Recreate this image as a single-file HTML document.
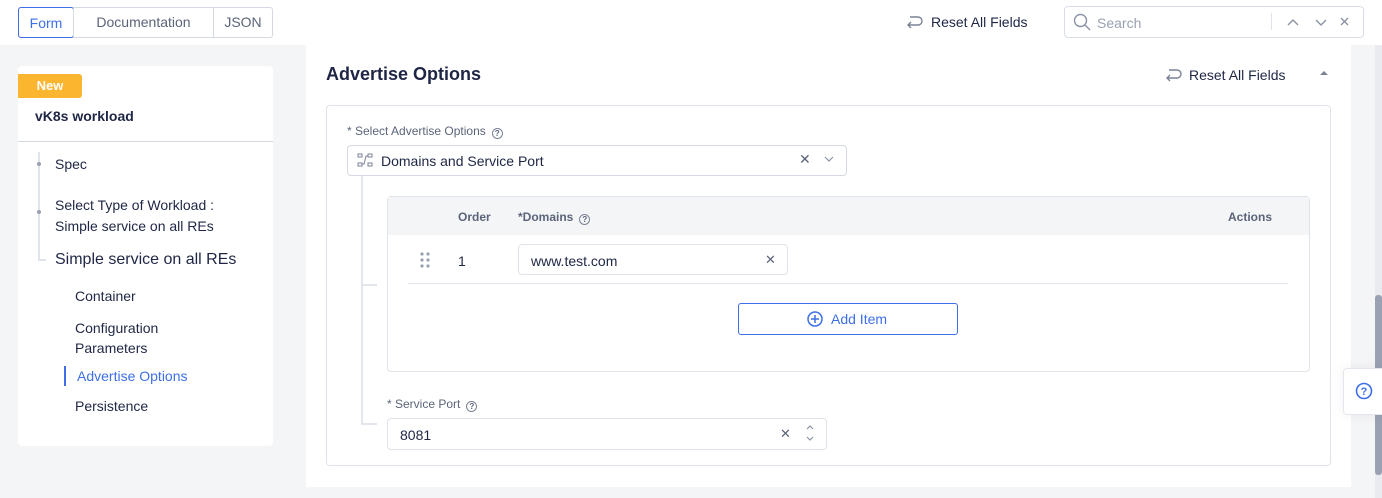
<!DOCTYPE html>
<html><head><meta charset="utf-8"><style>
*{box-sizing:border-box;margin:0;padding:0}
body{width:1382px;height:498px;overflow:hidden;background:#f4f5f7;font-family:"Liberation Sans",sans-serif;color:#1f2645;position:relative;font-size:14px}
.abs{position:absolute}
.top{left:0;top:0;width:1382px;height:45px;background:#fff}
.tabs{left:18px;top:7px;width:255px;height:31px;display:flex;border:1px solid #d5d9e2;border-radius:3px}
.tabs div{line-height:29px;color:#5b6479;border-left:1px solid #d5d9e2;text-align:center}
.tabs div:first-child{border:1px solid #3d6fe8;color:#3d6fe8;margin:-1px;border-radius:3px;line-height:31px}
.search{left:1064px;top:6px;width:300px;height:32px;border:1px solid #d9dde5;border-radius:4px}
.card{left:18px;top:66px;width:255px;height:380px;background:#fff;border-radius:4px}
.main{left:306px;top:45px;width:1045px;height:442px;background:#fff}
.box{border:1px solid #dfe3ea;border-radius:4px}
.g{color:#5b6479}
.q{display:inline-block;width:11px;height:11px;border:1px solid #7a8296;border-radius:50%;font-size:8px;line-height:9px;text-align:center;vertical-align:-1px;margin-left:6px;font-weight:bold}
</style></head><body>
<div class="abs top"></div>
<div class="abs tabs"><div style="width:56px">Form</div><div style="width:140px">Documentation</div><div style="width:59px">JSON</div></div>
<svg class="abs" style="left:905px;top:14px" width="18" height="16" viewBox="0 0 18 16"><path d="M5 3h8a4 4 0 010 8H3M6 8l-3 3 3 3" fill="none" stroke="#7a8296" stroke-width="1.4"/></svg>
<div class="abs" style="left:931px;top:14px;color:#1f2645">Reset All Fields</div>
<div class="abs search"></div>
<svg class="abs" style="left:1073px;top:13px" width="18" height="18"><circle cx="7.5" cy="7.5" r="6" fill="none" stroke="#8a92a6" stroke-width="1.4"/><path d="M12 12l5 5" stroke="#8a92a6" stroke-width="1.4"/></svg>
<div class="abs" style="left:1097px;top:15px;color:#9aa1b2">Search</div>
<div class="abs" style="left:1271px;top:13px;width:1px;height:17px;background:#dfe3ea"></div>
<svg class="abs" style="left:1286px;top:15px" width="70" height="14"><path d="M2 10l5-5 5 5M30 5l5 5 5-5M55 3l7 7M62 3l-7 7" fill="none" stroke="#8a92a6" stroke-width="1.4"/></svg>

<div class="abs card"></div>
<div class="abs" style="left:18px;top:74px;width:64px;height:24px;background:#fbb52f;border-radius:0 3px 3px 0;color:#fff;font-weight:bold;font-size:13px;text-align:center;line-height:24px">New</div>
<div class="abs" style="left:35px;top:108px;font-weight:bold;font-size:14px">vK8s workload</div>
<div class="abs" style="left:18px;top:141px;width:255px;height:1px;background:#d5d9e2"></div>
<div class="abs" style="left:38px;top:152px;width:2px;height:108px;background:#dfe3ea"></div>
<div class="abs" style="left:38px;top:259px;width:8px;height:2px;background:#dfe3ea"></div>
<div class="abs" style="left:37px;top:162px;width:4px;height:4px;border-radius:50%;background:#9aa1b2"></div>
<div class="abs" style="left:37px;top:210px;width:4px;height:4px;border-radius:50%;background:#9aa1b2"></div>
<div class="abs" style="left:55px;top:156px">Spec</div>
<div class="abs" style="left:55px;top:195px;line-height:21px">Select Type of Workload :<br>Simple service on all REs</div>
<div class="abs" style="left:55px;top:251px;font-size:16px">Simple service on all REs</div>
<div class="abs" style="left:75px;top:288px">Container</div>
<div class="abs" style="left:75px;top:318px;line-height:20px">Configuration<br>Parameters</div>
<div class="abs" style="left:64px;top:366px;width:2px;height:20px;background:#3d6fe8"></div>
<div class="abs" style="left:77px;top:368px;color:#3d6fe8">Advertise Options</div>
<div class="abs" style="left:75px;top:398px">Persistence</div>

<div class="abs main"></div>
<div class="abs" style="left:326px;top:64px;font-size:18px;font-weight:bold">Advertise Options</div>
<svg class="abs" style="left:1164px;top:67px" width="18" height="16" viewBox="0 0 18 16"><path d="M5 3h8a4 4 0 010 8H3M6 8l-3 3 3 3" fill="none" stroke="#7a8296" stroke-width="1.4"/></svg>
<div class="abs" style="left:1189px;top:67px">Reset All Fields</div>
<svg class="abs" style="left:1319px;top:69px" width="10" height="8"><path d="M1 6l4-4 4 4z" fill="#7a8296"/></svg>
<div class="abs box" style="left:326px;top:105px;width:1005px;height:361px"></div>
<div class="abs g" style="left:347px;top:124px;font-size:12px">* Select Advertise Options<span class="q">?</span></div>
<div class="abs box" style="left:347px;top:145px;width:500px;height:31px;border-color:#d5d9e2"></div>
<svg class="abs" style="left:357px;top:153px" width="16" height="14"><rect x="1" y="1" width="4" height="3" fill="none" stroke="#7a8296"/><rect x="11" y="1" width="4" height="3" fill="none" stroke="#7a8296"/><rect x="1" y="10" width="4" height="3" fill="none" stroke="#7a8296"/><rect x="11" y="10" width="4" height="3" fill="none" stroke="#7a8296"/><path d="M5 11h2l2-8h2" fill="none" stroke="#7a8296"/></svg>
<div class="abs" style="left:381px;top:153px">Domains and Service Port</div>
<div class="abs g" style="left:799px;top:151px;font-size:14px">✕</div>
<svg class="abs" style="left:824px;top:156px" width="10" height="7"><path d="M1 1l4 4 4-4" fill="none" stroke="#8a92a6" stroke-width="1.2"/></svg>
<div class="abs" style="left:361px;top:176px;width:2px;height:249px;background:#e3e6ec"></div>
<div class="abs" style="left:361px;top:284px;width:16px;height:2px;background:#e3e6ec"></div>
<div class="abs" style="left:361px;top:423px;width:16px;height:2px;background:#e3e6ec"></div>
<div class="abs box" style="left:387px;top:196px;width:923px;height:176px"></div>
<div class="abs" style="left:388px;top:197px;width:921px;height:38px;background:#f4f5f7"></div>
<div class="abs g" style="left:458px;top:210px;font-size:12px;font-weight:bold">Order</div>
<div class="abs g" style="left:518px;top:210px;font-size:12px;font-weight:bold">*Domains<span class="q">?</span></div>
<div class="abs g" style="left:1228px;top:210px;font-size:12px;font-weight:bold">Actions</div>
<svg class="abs" style="left:420px;top:252px" width="12" height="16"><g fill="#9aa1b2"><circle cx="2" cy="2" r="1.6"/><circle cx="8" cy="2" r="1.6"/><circle cx="2" cy="8" r="1.6"/><circle cx="8" cy="8" r="1.6"/><circle cx="2" cy="14" r="1.6"/><circle cx="8" cy="14" r="1.6"/></g></svg>
<div class="abs" style="left:458px;top:253px">1</div>
<div class="abs box" style="left:518px;top:244px;width:270px;height:31px"></div>
<div class="abs" style="left:531px;top:253px">www.test.com</div>
<div class="abs g" style="left:765px;top:252px;font-size:13px">✕</div>
<div class="abs" style="left:408px;top:283px;width:880px;height:1px;background:#e3e6ec"></div>
<div class="abs" style="left:738px;top:303px;width:220px;height:32px;border:1px solid #3d6fe8;border-radius:3px"></div>
<svg class="abs" style="left:806px;top:310px" width="18" height="18"><circle cx="9" cy="9" r="7" fill="none" stroke="#3d6fe8" stroke-width="1.5"/><path d="M9 5v8M5 9h8" stroke="#3d6fe8" stroke-width="1.5"/></svg>
<div class="abs" style="left:831px;top:311px;color:#3d6fe8">Add Item</div>
<div class="abs g" style="left:387px;top:397px;font-size:12px">* Service Port<span class="q">?</span></div>
<div class="abs box" style="left:387px;top:418px;width:440px;height:32px"></div>
<div class="abs" style="left:400px;top:427px">8081</div>
<div class="abs g" style="left:780px;top:426px;font-size:13px">✕</div>
<svg class="abs" style="left:805px;top:423px" width="10" height="20"><path d="M2 6l3-3 3 3M2 14l3 3 3-3" fill="none" stroke="#8a92a6" stroke-width="1.2"/></svg>

<div class="abs" style="left:1375px;top:45px;width:7px;height:453px;background:#e9ebf0"></div>
<div class="abs" style="left:1375px;top:295px;width:7px;height:180px;background:#9aa1b2;border-radius:3px"></div>
<div class="abs" style="left:1343px;top:368px;width:45px;height:47px;background:#fff;border:1px solid #e3e6ec;border-radius:4px;box-shadow:0 0 12px rgba(0,0,0,.06)"></div>
<svg class="abs" style="left:1355px;top:382px" width="18" height="18"><circle cx="9" cy="9" r="7.5" fill="none" stroke="#3d6fe8" stroke-width="1.6"/><text x="9" y="13" font-size="11" font-weight="bold" text-anchor="middle" fill="#3d6fe8" font-family="Liberation Sans">?</text></svg>
</body></html>
